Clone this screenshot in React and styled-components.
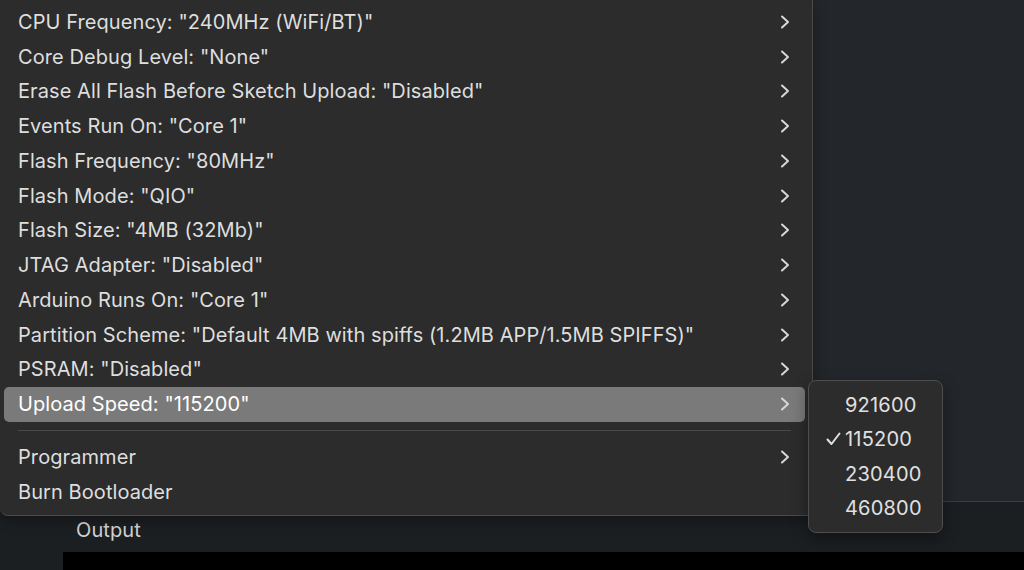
import React from 'react'
import styled, { createGlobalStyle } from 'styled-components'

const Global = createGlobalStyle`
  html, body { margin: 0; padding: 0; background: #23272b; }
  body {
    font-family: Inter, "Noto Sans", "Liberation Sans", sans-serif;
    -webkit-font-smoothing: antialiased;
  }
`

const Window = styled.div`
  position: relative;
  width: 1024px;
  height: 570px;
  overflow: hidden;
  display: grid;
  grid-template-rows: 502px 50px 1fr;
  background: #23272b;
`

const Editor = styled.div`
  background: #23272b;
  border-bottom: 1px solid #3a3e42;
`

const OutputHeader = styled.div`
  background: #1c1f22;
  display: flex;
  align-items: center;
  padding: 5px 0 0 76px;
  color: #d2d2d2;
  font-size: 20px;
  letter-spacing: 0.1px;
`

const OutputBody = styled.div`
  display: grid;
  grid-template-columns: 63px 1fr;
  background: #1c1f22;
`

const Console = styled.div`
  background: #000;
`

const Menu = styled.div`
  position: absolute;
  left: 0;
  top: 0;
  width: 812px;
  padding: 4.6px 0 6px;
  background: #2c2c2c;
  border-right: 1px solid #4a4a4a;
  border-bottom: 1px solid #4a4a4a;
  border-bottom-right-radius: 2px;
  border-bottom-left-radius: 8px;
  box-shadow: 0 4px 14px rgba(0, 0, 0, 0.35);
`

const Row = styled.div`
  height: 34.75px;
  margin: 0 7px 0 4px;
  padding: 0 15px 0 14px;
  display: flex;
  align-items: center;
  justify-content: space-between;
  border-radius: 5px;
  color: ${p => (p.$active ? '#ffffff' : '#dedede')};
  background: ${p => (p.$active ? '#7a7a7a' : 'transparent')};
  font-size: 20px;
  letter-spacing: 0.08px;
  white-space: nowrap;
`

const Separator = styled.div`
  height: 18px;
  display: flex;
  align-items: center;
  padding: 0 21px 0 18px;
  &::after {
    content: '';
    flex: 1;
    height: 1px;
    background: #4a4a4a;
  }
`

const Submenu = styled.div`
  position: absolute;
  left: 808px;
  top: 380px;
  width: 133px;
  padding: 6.6px 0;
  background: #2c2c2c;
  border: 1px solid #4e4e4e;
  border-radius: 8px;
  box-shadow: 0 6px 16px rgba(0, 0, 0, 0.4);
`

const Option = styled.div`
  height: 34.5px;
  display: flex;
  align-items: center;
  padding-left: 17px;
  gap: 4px;
  color: #e0e0e0;
  font-size: 20px;
  letter-spacing: 0.2px;
`

const CheckSlot = styled.span`
  width: 15px;
  display: inline-flex;
  align-items: center;
`

const Chevron = () => (
  <svg width="10" height="14" viewBox="0 0 10 14">
    <polyline points="2,1.5 8,7 2,12.5" fill="none" stroke="#d8d8d8" strokeWidth="2" strokeLinecap="round" strokeLinejoin="round" />
  </svg>
)

const Check = () => (
  <svg width="15" height="14" viewBox="0 0 15 14">
    <polyline points="1.5,7.5 5.5,12 13.5,1.5" fill="none" stroke="#e0e0e0" strokeWidth="2" strokeLinecap="round" strokeLinejoin="round" />
  </svg>
)

const items = [
  'CPU Frequency: "240MHz (WiFi/BT)"',
  'Core Debug Level: "None"',
  'Erase All Flash Before Sketch Upload: "Disabled"',
  'Events Run On: "Core 1"',
  'Flash Frequency: "80MHz"',
  'Flash Mode: "QIO"',
  'Flash Size: "4MB (32Mb)"',
  'JTAG Adapter: "Disabled"',
  'Arduino Runs On: "Core 1"',
  'Partition Scheme: "Default 4MB with spiffs (1.2MB APP/1.5MB SPIFFS)"',
  'PSRAM: "Disabled"',
  'Upload Speed: "115200"',
]

const speeds = ['921600', '115200', '230400', '460800']

export default function App() {
  return (
    <>
      <Global />
      <Window>
        <Editor />
        <OutputHeader>Output</OutputHeader>
        <OutputBody>
          <div />
          <Console />
        </OutputBody>

        <Menu>
          {items.map((label, i) => (
            <Row key={i} $active={i === items.length - 1}>
              <span>{label}</span>
              <Chevron />
            </Row>
          ))}
          <Separator />
          <Row>
            <span>Programmer</span>
            <Chevron />
          </Row>
          <Row>
            <span>Burn Bootloader</span>
          </Row>
        </Menu>

        <Submenu>
          {speeds.map(s => (
            <Option key={s}>
              <CheckSlot>{s === '115200' && <Check />}</CheckSlot>
              {s}
            </Option>
          ))}
        </Submenu>
      </Window>
    </>
  )
}
